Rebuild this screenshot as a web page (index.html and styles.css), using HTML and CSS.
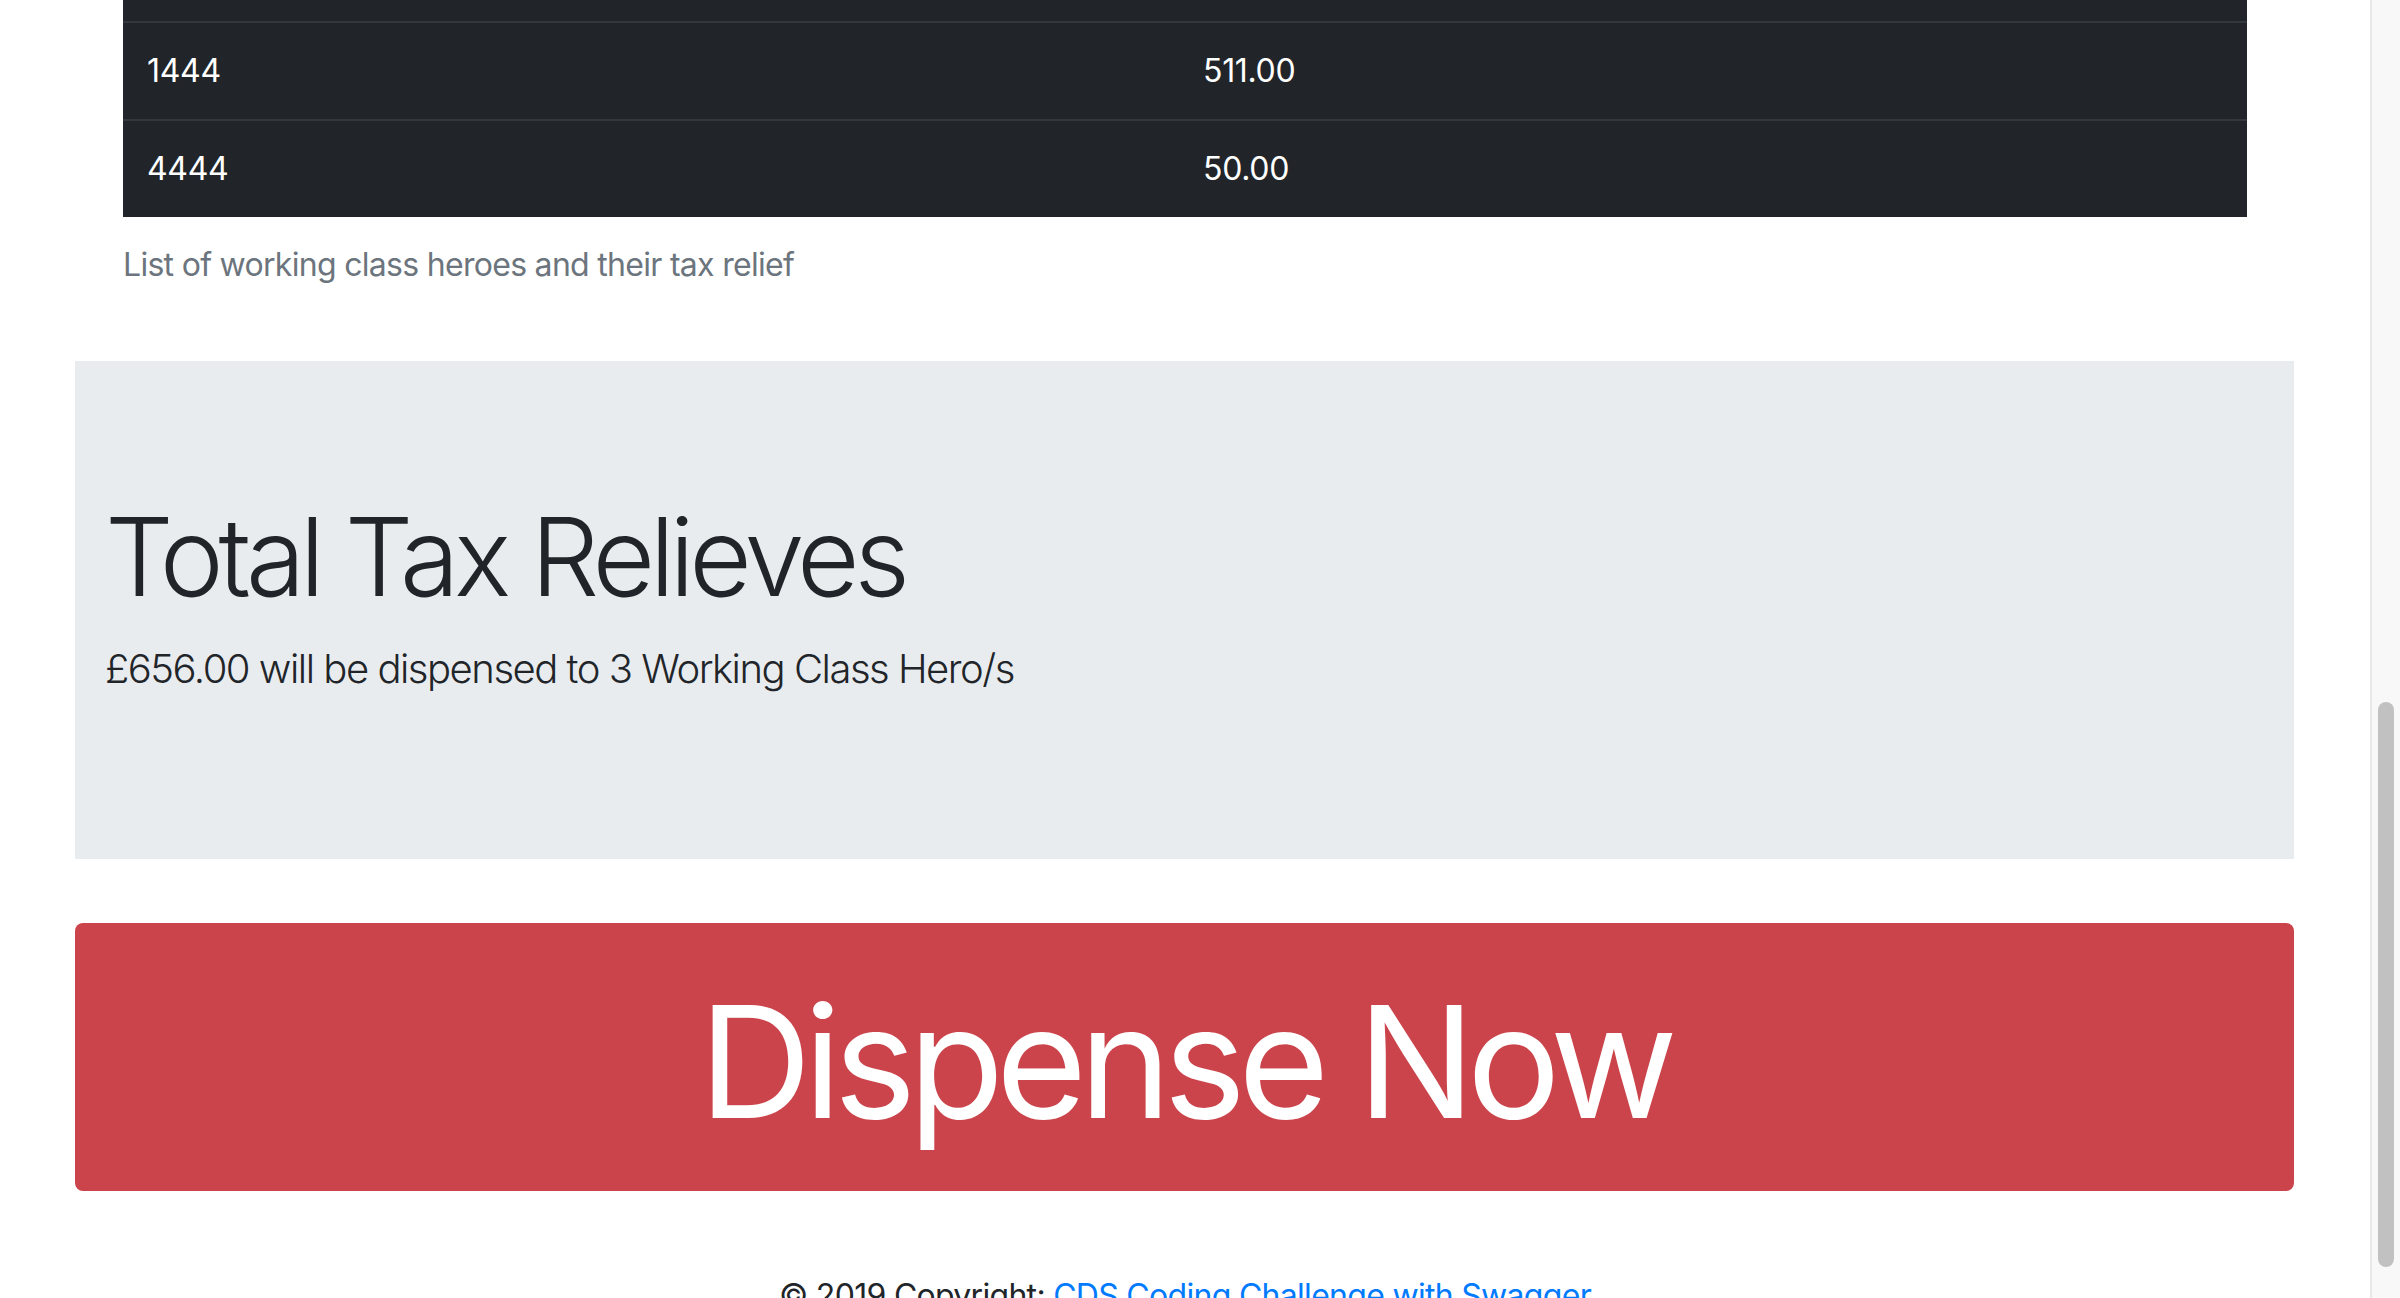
FILE: index.html
```html
<!DOCTYPE html>
<html lang="en">
<head>
<meta charset="utf-8">
<title>Working Class Heroes</title>
<link rel="stylesheet" href="styles.css">
</head>
<body>
<div class="page">
  <main class="content">
    <div class="table-wrap">
      <table class="heroes">
        <caption>List of working class heroes and their tax relief</caption>
        <tbody>
          <tr class="cut"><td></td><td></td></tr>
          <tr><td class="col-id">1444</td><td>511.00</td></tr>
          <tr><td class="col-id">4444</td><td>50.00</td></tr>
        </tbody>
      </table>
    </div>
    <section class="jumbotron">
      <h1 class="display">Total Tax Relieves</h1>
      <p class="lead">£656.00 will be dispensed to 3 Working Class Hero/s</p>
    </section>
    <button class="btn-dispense" type="button">Dispense Now</button>
    <footer class="footer">© 2019 Copyright: <a href="#">CDS Coding Challenge with Swagger</a></footer>
  </main>
  <div class="scrollbar"><div class="thumb"></div></div>
</div>
</body>
</html>
```
FILE: styles.css
```css
html, body {
  margin: 0;
  padding: 0;
  background: #fff;
}
body {
  font-family: Inter, "Noto Sans", sans-serif;
  color: #212529;
  font-size: 32px;
  line-height: 1.5;
}
.page {
  display: flex;
  height: 1298px;
  overflow: hidden;
}
.content {
  flex: 1;
  display: flex;
  flex-direction: column;
  min-width: 0;
}
.content > * {
  flex-shrink: 0;
}
.table-wrap {
  padding: 0 123px;
}
.heroes {
  width: 100%;
  border-collapse: collapse;
  background: #212529;
  color: #fff;
}
.heroes td {
  padding: 24px 24px;
  border-top: 2px solid #32383e;
  vertical-align: top;
  line-height: 48px;
  letter-spacing: -0.01em;
}
.heroes .col-id {
  width: 1008px;
}
.heroes .cut td {
  border-top: none;
  padding: 0;
  height: 21px;
  line-height: 21px;
}
.heroes caption {
  caption-side: bottom;
  text-align: left;
  color: #6c757d;
  padding: 24px 0;
  line-height: 48px;
  letter-spacing: -0.022em;
}
.jumbotron {
  margin: 48px 76px 64px 75px;
  background: #e9ecef;
  padding: 128px 32px 128px 30px;
}
.display {
  margin: 0 0 14px;
  font-size: 108px;
  font-weight: 300;
  line-height: 136px;
  letter-spacing: -0.05em;
}
.lead {
  margin: 0 0 32px;
  font-size: 40px;
  font-weight: 300;
  line-height: 60px;
  letter-spacing: -0.037em;
}
.btn-dispense {
  margin: 0 76px 0 75px;
  height: 268px;
  border: none;
  border-radius: 8px;
  background: #cb444b;
  color: #fff;
  font-family: Inter, "Noto Sans", sans-serif;
  font-size: 156px;
  font-weight: 400;
  line-height: 1.5;
  letter-spacing: -0.05em;
  padding: 10px 0 0;
}
.footer {
  padding-top: 81px;
  text-align: center;
  color: #212529;
  line-height: 48px;
  letter-spacing: -0.022em;
}
.footer a {
  color: #007bff;
  text-decoration: none;
}
.scrollbar {
  width: 28px;
  flex: none;
  background: #f8f8f8;
  border-left: 2px solid #e8e8e8;
  display: flex;
  flex-direction: column;
}
.thumb {
  margin: 702px 0 0 6px;
  width: 16px;
  height: 565px;
  border-radius: 8px;
  background: #c1c1c1;
}
```
